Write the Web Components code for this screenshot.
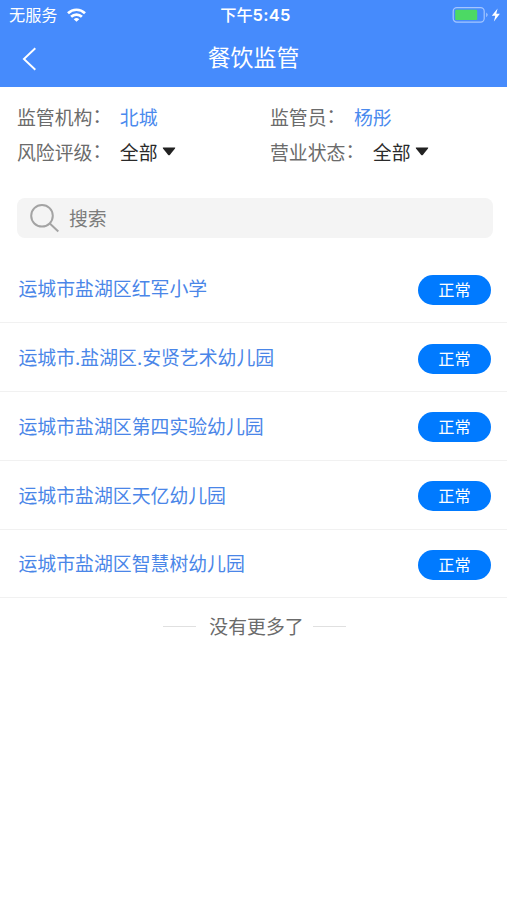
<!DOCTYPE html>
<html lang="zh-CN">
<head>
<meta charset="utf-8">
<title>餐饮监管</title>
<style>
body {
  margin: 0;
  background: #fff;
  color: #6b6b6b;
  font: 18.87px/26px "Noto Sans CJK SC", sans-serif;
}
</style>
</head>
<body>
<supervise-app></supervise-app>

<script>
let define = (name, html, setup) => {
  let tmpl = document.createElement('template')
  tmpl.innerHTML = html
  customElements.define(name, class extends HTMLElement {
    constructor () {
      super()
      this.attachShadow({mode: 'open'})
      this.shadowRoot.appendChild(document.importNode(tmpl.content, true))
    }

    connectedCallback () { if (setup) setup(this, this.shadowRoot) }
  })
}

define('status-bar', `
  <style>
  :host {
    display: grid;
    grid-template-columns: 1fr auto 1fr;
    align-items: center;
    height: 30px;
    padding: 0 6px 0 9px;
    font-size: 16.2px;
    line-height: 28px;
  }
  div { display: flex; align-items: center; height: 30px; }
  span { height: 30px; }
  svg { display: block; }
  .wifi { margin-left: 9px; }
  .time { font-weight: 500; padding-left: 1px; }
  .time b {
    font: 600 16.5px/30px Inter, sans-serif;
    letter-spacing: .3px;
  }
  .power { justify-content: flex-end; }
  </style>
  <div><span>无服务</span>
    <svg class="wifi" width="19" height="14" viewBox="0 0 19 14" fill="none" stroke="#fff" stroke-width="2.7">
      <path d="M1 5.2a12.2 12.2 0 0 1 17 0M4.1 8.8a7.8 7.8 0 0 1 10.8 0"/>
      <path d="M9.5 13.8 6.7 11.2a4.2 4.2 0 0 1 5.6 0z" fill="#fff" stroke="none"/>
    </svg>
  </div>
  <div class="time"><span>下午</span><b>5:45</b></div>
  <div class="power">
    <svg width="49" height="18" viewBox="0 0 49 18">
      <rect x="1.2" y="1.7" width="31" height="14.4" rx="3.6" fill="none" stroke="#a4c6ff" stroke-width="1.2"/>
      <rect x="3.2" y="3.7" width="22" height="10.4" rx="1.2" fill="#4cd964"/>
      <path d="M34.2 6.6q3 2.3 0 4.7z" fill="#a4c6ff"/>
      <path d="M45.6 2.4 39.8 9.8h3.5l-1.4 5.8 6-7.8h-3.6z" fill="#fff"/>
    </svg>
  </div>`)

define('nav-bar', `
  <style>
  :host {
    display: grid;
    grid-template-columns: 1fr auto 1fr;
    align-items: center;
    height: 57px;
    padding: 0 22px;
    font-size: 22.9px;
    line-height: 53px;
  }
  svg { display: block; }
  .title { height: 57px; }
  </style>
  <svg width="15" height="24" viewBox="0 0 15 24" fill="none" stroke="#fff" stroke-width="1.9">
    <path d="M13.3 1.2 1.9 12 13.3 22.8"/>
  </svg>
  <span class="title"><slot></slot></span>`)

define('filter-field', `
  <style>
  :host { display: flex; align-items: center; height: 35px; }
  .colon { margin: 0 8.5px 4px 0; text-indent: 0; }
  .value { color: #4a8aee; }
  svg { display: none; margin: 0 0 0 4.5px; }
  :host([menu]) .value { color: #2a2a2a; }
  :host([menu]) svg { display: block; }
  </style>
  <span class="label"></span><span class="colon">：</span>
  <span class="value"><slot></slot></span>
  <svg width="14" height="9" viewBox="0 0 14 9">
    <path d="M1.2.5h11.6q.9.2.2 1.1L8 7.8q-1 1.1-2 0L1 1.6Q.3.7 1.2.5z" fill="#222"/>
  </svg>`, (el, root) => {
  root.querySelector('.label').textContent = el.getAttribute('label')
})

define('search-box', `
  <style>
  :host {
    display: flex;
    align-items: center;
    box-sizing: border-box;
    height: 40px;
    margin: 29px 14px 0 17px;
    padding-left: 13px;
    border-radius: 8px;
    background: #f4f4f4;
    color: #7c7c7c;
  }
  svg { margin-right: 9px; }
  </style>
  <svg width="30" height="30" viewBox="0 0 30 30" fill="none" stroke="#a3a3a3" stroke-width="2">
    <circle cx="12" cy="12.8" r="10.8"/>
    <path d="m19.8 20.5 8.5 8"/>
  </svg>
  <slot></slot>`)

define('shop-row', `
  <style>
  :host {
    display: flex;
    align-items: center;
    justify-content: space-between;
    box-sizing: border-box;
    height: 68.75px;
    padding: 0 16px 0 18.5px;
    border-bottom: 1.4px solid #f1f1f1;
    color: #4a86e8;
  }
  .state {
    width: 73px;
    height: 30px;
    margin-top: 3px;
    border-radius: 15px;
    background: #007aff;
    color: #fff;
    font-size: 16.2px;
    line-height: 29px;
    text-align: center;
  }
  </style>
  <slot></slot>
  <span class="state"></span>`, (el, root) => {
  root.querySelector('.state').textContent = el.getAttribute('state')
})

define('list-end', `
  <style>
  :host {
    display: flex;
    align-items: center;
    justify-content: center;
    height: 56px;
    padding-left: 2px;
  }
  :host::before, :host::after {
    content: "";
    width: 33px;
    height: 1px;
    background: #e0e0e0;
  }
  span { margin: 0 9px 0 13px; }
  </style>
  <span><slot></slot></span>`)

define('supervise-app', `
  <style>
  :host { display: block; }
  header {
    background: #468bfc;
    color: #fff;
  }
  .filters {
    display: grid;
    grid-template-columns: 253px 1fr;
    padding: 12px 0 0 17px;
  }
  .list { padding-top: 16.5px; }
  </style>
  <header>
    <status-bar></status-bar>
    <nav-bar>餐饮监管</nav-bar>
  </header>
  <div class="filters">
    <filter-field label="监管机构">北城</filter-field>
    <filter-field label="监管员">杨彤</filter-field>
    <filter-field label="风险评级" menu>全部</filter-field>
    <filter-field label="营业状态" menu>全部</filter-field>
  </div>
  <search-box>搜索</search-box>
  <div class="list">
    <shop-row state="正常">运城市盐湖区红军小学</shop-row>
    <shop-row state="正常">运城市.盐湖区.安贤艺术幼儿园</shop-row>
    <shop-row state="正常">运城市盐湖区第四实验幼儿园</shop-row>
    <shop-row state="正常">运城市盐湖区天亿幼儿园</shop-row>
    <shop-row state="正常">运城市盐湖区智慧树幼儿园</shop-row>
  </div>
  <list-end>没有更多了</list-end>`)
</script>
</body>
</html>
